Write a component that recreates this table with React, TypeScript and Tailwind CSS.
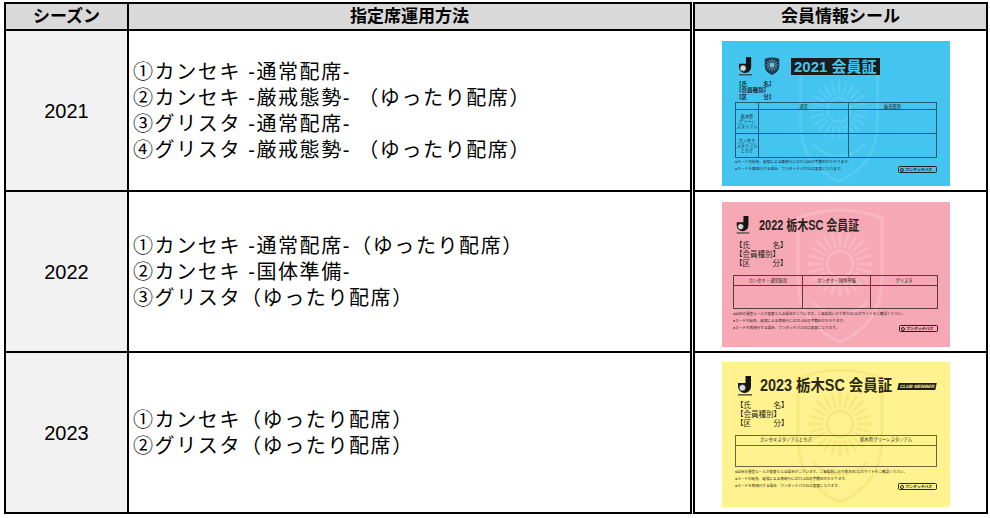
import type { ReactNode } from "react";

const rows = [
  {
    year: "2021",
    lines: ["①カンセキ -通常配席-", "②カンセキ -厳戒態勢- （ゆったり配席）", "③グリスタ -通常配席-", "④グリスタ -厳戒態勢- （ゆったり配席）"],
  },
  {
    year: "2022",
    lines: ["①カンセキ -通常配席-（ゆったり配席）", "②カンセキ -国体準備-", "③グリスタ（ゆったり配席）"],
  },
  {
    year: "2023",
    lines: ["①カンセキ（ゆったり配席）", "②グリスタ（ゆったり配席）"],
  },
];

function Watermark({ className }: { className: string }) {
  const rays = Array.from({ length: 24 }, (_, i) => (i * 15 * Math.PI) / 180);
  return (
    <svg viewBox="0 0 100 140" className={className} fill="none" stroke="currentColor" strokeWidth="3">
      <path d="M8 12 Q50 -4 92 12 V72 Q92 118 50 136 Q8 118 8 72 Z" />
      <circle cx="50" cy="58" r="13" />
      {rays.map((r) => (
        <line key={r} x1={50 + 17 * Math.cos(r)} y1={58 + 17 * Math.sin(r)} x2={50 + 32 * Math.cos(r)} y2={58 + 32 * Math.sin(r)} />
      ))}
      <path d="M22 96 Q50 122 78 96" />
    </svg>
  );
}

function JLogo({ className }: { className: string }) {
  return (
    <svg viewBox="0 0 16 20" className={className}>
      <rect x="8.5" y="0" width="5.5" height="8" fill="#151515" />
      <path d="M1 7 H14 V10.5 A6.5 6.5 0 0 1 1 10.5 Z" fill="#151515" />
      <circle cx="5.4" cy="11.8" r="3.3" fill="#d9d9d9" stroke="#151515" strokeWidth="0.6" />
      <rect x="1" y="18.2" width="14" height="1.3" fill="#3a3a3a" />
    </svg>
  );
}

function ClubCrest({ className }: { className: string }) {
  const rays = Array.from({ length: 12 }, (_, i) => (i * 30 * Math.PI) / 180);
  return (
    <svg viewBox="0 0 20 22" className={className}>
      <path d="M2 3 Q10 0 18 3 V11 Q18 18 10 21 Q2 18 2 11 Z" fill="#1d3b52" />
      {rays.map((r) => (
        <line key={r} x1={10 + 3 * Math.cos(r)} y1={10 + 3 * Math.sin(r)} x2={10 + 6.5 * Math.cos(r)} y2={10 + 6.5 * Math.sin(r)} stroke="#7cc0dc" strokeWidth="0.9" />
      ))}
      <circle cx="10" cy="10" r="2.6" fill="#7cc0dc" />
    </svg>
  );
}

function PassLogo() {
  return (
    <div className="flex items-center shrink-0 h-[7px] w-[39px] border border-[#222] rounded-[1.5px] px-[1px] gap-[1px] overflow-hidden">
      <span className="shrink-0 w-[4px] h-[4px] rounded-full border border-[#222]" />
      <span className="text-[4px] font-bold italic leading-none whitespace-nowrap tracking-[-0.2px]">ワンタッチパス</span>
    </div>
  );
}

function Fields({ className }: { className: string }) {
  return (
    <div className={className}>
      <div>【氏　　　名】</div>
      <div>【会員種別】</div>
      <div>【区　　　分】</div>
    </div>
  );
}

function Card2021() {
  return (
    <div className="relative w-[228px] h-[145px] overflow-hidden bg-[#43c5f0] text-[#1b2a30]">
      <Watermark className="absolute left-[62px] top-[16px] w-[110px] h-[128px] text-[#55cbf2]" />
      <div className="relative flex flex-col px-[13px] pt-[15px]">
        <div className="flex items-center h-[20px] pl-[3px]">
          <JLogo className="w-[15px] h-[19px]" />
          <ClubCrest className="ml-[10px] w-[18px] h-[20px]" />
          <div className="ml-[10px] bg-[#1c1c1c] text-[#43c5f0] font-bold text-[15px] leading-[17px] px-[3px]">2021 会員証</div>
        </div>
        <Fields className="mt-[5px] pl-[1px] text-[5.5px] leading-[6.4px] font-bold" />
        <div className="mt-[2px] h-[56px] border border-[#1f5c72] grid grid-cols-[23px_90px_1fr] grid-rows-[7px_1fr_1fr] text-[4.2px] leading-[5px] text-center">
          <div className="border-r border-b border-[#1f5c72]" />
          <div className="border-r border-b border-[#1f5c72] flex items-center justify-center">通常</div>
          <div className="border-b border-[#1f5c72] flex items-center justify-center">厳戒態勢</div>
          <div className="border-r border-b border-[#1f5c72] flex items-center justify-center">
            栃木県<br />グリーン<br />スタジアム
          </div>
          <div className="border-r border-b border-[#1f5c72]" />
          <div className="border-b border-[#1f5c72]" />
          <div className="border-r border-[#1f5c72] flex items-center justify-center">
            カンセキ<br />スタジアム<br />とちぎ
          </div>
          <div className="border-r border-[#1f5c72]" />
          <div />
        </div>
        <div className="mt-[1px] text-[3.7px] leading-[7px] whitespace-nowrap">
          <div>●カードの紛失、破損による再発行には¥1,000の手数料がかかります。</div>
          <div className="flex items-center justify-between">
            <span>●カードを再発行する場合、ワンタッチパスIDは変更になります。</span>
            <PassLogo />
          </div>
        </div>
      </div>
    </div>
  );
}

function Notes() {
  return (
    <div className="mt-[2px] text-[3.6px] leading-[7px] whitespace-nowrap">
      <div>●試合の運営ルールが変更となる場合がございます。ご来場前に必ず栃木SC公式サイトをご確認ください。</div>
      <div>●カードの紛失、破損による再発行には¥1,000の手数料がかかります。</div>
      <div className="flex items-center justify-between">
        <span>●カードを再発行する場合、ワンタッチパスIDは変更になります。</span>
        <PassLogo />
      </div>
    </div>
  );
}

function Card2022() {
  return (
    <div className="relative w-[228px] h-[145px] overflow-hidden bg-[#f6a9b5] text-[#2a1f21]">
      <Watermark className="absolute left-[66px] top-[4px] w-[104px] h-[140px] text-[#f8b6c1]" />
      <div className="relative flex flex-col pl-[11px] pr-[12px] pt-[14px]">
        <div className="flex items-center h-[18px] pl-[2px]">
          <JLogo className="w-[16px] h-[18px]" />
          <div className="ml-[8px] w-[100px]">
            <span className="inline-block origin-left scale-x-[0.78] text-[14px] font-bold leading-none whitespace-nowrap">2022 栃木SC 会員証</span>
          </div>
        </div>
        <Fields className="mt-[8px] pl-[2px] text-[7.5px] leading-[8.8px]" />
        <div className="mt-[7px] h-[34px] border border-[#5a3a40] grid grid-cols-[69px_68px_1fr] grid-rows-[10px_1fr] text-[4.3px] leading-none text-center">
          <div className="border-r border-b border-[#5a3a40] flex items-center justify-center">カンセキ・通常配席</div>
          <div className="border-r border-b border-[#5a3a40] flex items-center justify-center">カンセキ・国体準備</div>
          <div className="border-b border-[#5a3a40] flex items-center justify-center">グリスタ</div>
          <div className="border-r border-[#5a3a40]" />
          <div className="border-r border-[#5a3a40]" />
          <div />
        </div>
        <Notes />
      </div>
    </div>
  );
}

function Card2023() {
  return (
    <div className="relative w-[228px] h-[145px] overflow-hidden bg-[#fff28f] text-[#2a2818]">
      <Watermark className="absolute left-[66px] top-[4px] w-[104px] h-[140px] text-[#f8e87f]" />
      <div className="relative flex flex-col pl-[13px] pr-[13px] pt-[14px]">
        <div className="flex items-center h-[20px] pl-[2px]">
          <JLogo className="w-[16px] h-[20px]" />
          <div className="ml-[7px] w-[138px]">
            <span className="inline-block origin-left scale-x-[0.9] text-[16px] font-bold leading-none whitespace-nowrap">2023 栃木SC 会員証</span>
          </div>
          <div className="-skew-x-12 bg-[#1c1c1c] text-[#fff28f] text-[4.6px] font-bold italic leading-[7px] px-[2px] whitespace-nowrap">CLUB MEMBER</div>
        </div>
        <Fields className="mt-[5px] pl-[1px] text-[7.5px] leading-[9px]" />
        <div className="mt-[7px] h-[32px] border border-[#6b6540] grid grid-cols-2 grid-rows-[10px_1fr] text-[4.4px] leading-none text-center">
          <div className="border-b border-[#6b6540] flex items-center justify-center">カンセキスタジアムとちぎ</div>
          <div className="border-b border-[#6b6540] flex items-center justify-center">栃木県グリーンスタジアム</div>
          <div />
          <div />
        </div>
        <Notes />
      </div>
    </div>
  );
}

const cards: ReactNode[] = [<Card2021 key="a" />, <Card2022 key="b" />, <Card2023 key="c" />];

export default function App() {
  return (
    <div className="w-[990px] h-[518px] bg-white text-black font-['Liberation_Sans','Noto_Sans_CJK_JP',sans-serif]">
      <div className="flex gap-px pl-[4px] pt-[2px]">
        <div className="w-[688px] border-2 border-black">
          <div className="flex h-[27px] border-b-2 border-black bg-[#d9d9d9] text-[17px] font-bold">
            <div className="w-[123px] border-r-2 border-black flex items-center justify-center">シーズン</div>
            <div className="flex-1 flex items-center justify-center">指定席運用方法</div>
          </div>
          {rows.map((r, i) => (
            <div key={r.year} className={i < 2 ? "flex h-[161px] border-b-2 border-black" : "flex h-[159px]"}>
              <div className="w-[123px] border-r-2 border-black bg-[#f2f2f2] flex items-center justify-center text-[20px]">{r.year}</div>
              <div className="flex-1 flex flex-col justify-center pl-[4px] text-[20px] leading-[26px] tracking-[1.6px]">
                {r.lines.map((l) => (
                  <div key={l}>{l}</div>
                ))}
              </div>
            </div>
          ))}
        </div>
        <div className="w-[295px] border-2 border-black">
          <div className="flex h-[27px] border-b-2 border-black bg-[#d9d9d9] text-[17px] font-bold items-center justify-center">会員情報シール</div>
          {cards.map((c, i) => (
            <div key={i} className={i < 2 ? "h-[161px] border-b-2 border-black pl-[27px] pt-[10px]" : "h-[159px] pl-[27px] pt-[9px]"}>
              {c}
            </div>
          ))}
        </div>
      </div>
    </div>
  );
}
